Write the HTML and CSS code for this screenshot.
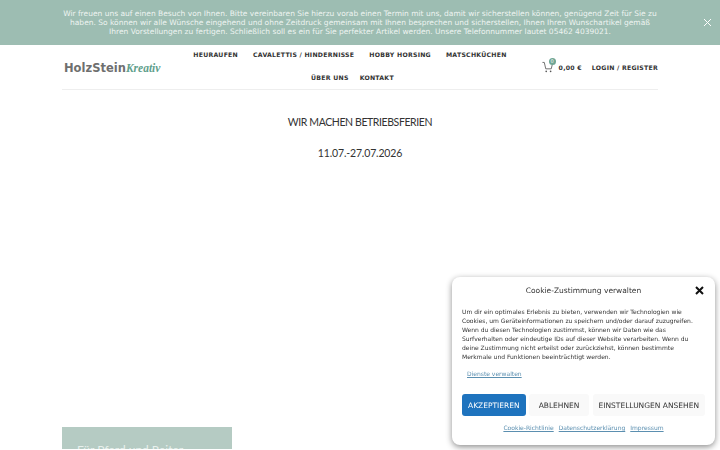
FILE: index.html
```html
<!DOCTYPE html>
<html lang="de">
<head>
  <meta charset="UTF-8">
  <meta name="viewport" content="width=device-width, initial-scale=1.0">
  <title>HolzStein Kreativ</title>
  <link rel="stylesheet" href="styles.css">
</head>
<body>

  <div class="notice">
    <p>Wir freuen uns auf einen Besuch von Ihnen. Bitte vereinbaren Sie hierzu vorab einen Termin mit uns, damit wir sicherstellen können, genügend Zeit für Sie zu haben. So können wir alle Wünsche eingehend und ohne Zeitdruck gemeinsam mit Ihnen besprechen und sicherstellen, Ihnen Ihren Wunschartikel gemäß Ihren Vorstellungen zu fertigen. Schließlich soll es ein für Sie perfekter Artikel werden. Unsere Telefonnummer lautet 05462 4039021.</p>
    <svg class="notice-close" width="9" height="9" viewBox="0 0 9 9"><path d="M1 1l7 7M8 1L1 8" stroke="#fff" stroke-width="1" fill="none"/></svg>
  </div>

  <header class="site-header">
    <a class="logo" href="#"><span class="logo-main">HolzStein</span><span class="logo-script">Kreativ</span></a>
    <nav class="main-nav">
      <a href="#">HEURAUFEN</a>
      <a href="#">CAVALETTIS / HINDERNISSE</a>
      <a href="#">HOBBY HORSING</a>
      <a href="#">MATSCHKÜCHEN</a>
      <a class="nav-about" href="#">ÜBER UNS</a>
      <a href="#">KONTAKT</a>
    </nav>
    <div class="header-tools">
      <div class="cart">
        <svg width="11" height="12" viewBox="0 0 12 13"><path d="M0.5 1.5h2l1.6 7h6l1.2-5" stroke="#555" stroke-width="0.9" fill="none"/><circle cx="4.6" cy="11.3" r="0.9" fill="#555"/><circle cx="9.4" cy="11.3" r="0.9" fill="#555"/></svg>
        <span class="cart-count">0</span>
      </div>
      <span class="cart-total">0,00 €</span>
      <a class="login" href="#">LOGIN / REGISTER</a>
    </div>
  </header>

  <main class="content">
    <h2>WIR MACHEN BETRIEBSFERIEN</h2>
    <h2 class="dates">11.07.-27.07.2026</h2>
    <div class="teaser">Für Pferd und Reiter</div>
  </main>

  <div class="cookie-box">
    <div class="cookie-head">
      <span>Cookie-Zustimmung verwalten</span>
      <svg class="cookie-close" width="9" height="9" viewBox="0 0 9 9"><path d="M1 1l7 7M8 1L1 8" stroke="#111" stroke-width="2" fill="none"/></svg>
    </div>
    <p class="cookie-text">Um dir ein optimales Erlebnis zu bieten, verwenden wir Technologien wie Cookies, um Geräteinformationen zu speichern und/oder darauf zuzugreifen. Wenn du diesen Technologien zustimmst, können wir Daten wie das Surfverhalten oder eindeutige IDs auf dieser Website verarbeiten. Wenn du deine Zustimmung nicht erteilst oder zurückziehst, können bestimmte Merkmale und Funktionen beeinträchtigt werden.</p>
    <a class="manage" href="#">Dienste verwalten</a>
    <div class="cookie-buttons">
      <button class="btn btn-accept">AKZEPTIEREN</button>
      <button class="btn btn-decline">ABLEHNEN</button>
      <button class="btn">EINSTELLUNGEN ANSEHEN</button>
    </div>
    <div class="cookie-links">
      <a href="#">Cookie-Richtlinie</a>
      <a href="#">Datenschutzerklärung</a>
      <a href="#">Impressum</a>
    </div>
  </div>

</body>
</html>
```

FILE: styles.css
```css
html, body {
  height: 100%;
  overflow: hidden;
}
body {
  margin: 0;
  background-color: #fff;
  font-family: "DejaVu Sans", sans-serif;
  color: #333;
}
a {
  color: inherit;
  text-decoration: none;
}

.notice {
  position: relative;
  height: 45px;
  box-sizing: border-box;
  padding-top: 9px;
  background-color: #9dbdb2;
}
.notice p {
  width: 600px;
  margin: 0 auto;
  font-size: 7.5px;
  line-height: 9px;
  text-align: center;
  color: #eef4f1;
}
.notice-close {
  position: absolute;
  top: 18px;
  right: 8px;
}

.site-header {
  display: flex;
  align-items: center;
  width: 596px;
  height: 44px;
  margin: 0 auto;
  border-bottom: 1px solid #eee;
}
.logo {
  display: flex;
  align-items: baseline;
  width: 118px;
  margin: 2px 0 0 2px;
  flex-shrink: 0;
}
.logo-main {
  font-size: 11.5px;
  font-weight: bold;
  color: #6f6f6f;
}
.logo-script {
  font-family: "Liberation Serif", serif;
  font-style: italic;
  font-weight: bold;
  font-size: 11.5px;
  color: #5fa08c;
}
.main-nav {
  display: flex;
  flex-wrap: wrap;
  justify-content: center;
  column-gap: 15px;
  width: 330px;
  margin: -2px 0 0 3px;
}
.main-nav a {
  line-height: 23px;
  font-size: 6.2px;
  font-weight: bold;
  letter-spacing: 0.25px;
  color: #333;
}
.main-nav .nav-about {
  margin: 0 -4px 0 5px;
}
.header-tools {
  display: flex;
  align-items: center;
  margin-left: auto;
  font-size: 6.2px;
  font-weight: bold;
  letter-spacing: 0.25px;
}
.cart {
  position: relative;
  display: flex;
  margin-right: 6px;
}
.cart-count {
  position: absolute;
  top: -3px;
  left: 7px;
  width: 7px;
  height: 7px;
  border-radius: 50%;
  background-color: #6fa593;
  font-size: 5px;
  font-weight: normal;
  line-height: 7px;
  text-align: center;
  color: #fff;
}
.cart-total {
  margin-right: 10px;
}

.content {
  width: 596px;
  margin: 0 auto;
  text-align: center;
}
.content h2 {
  margin: 24px 0 0;
  font-family: Lato, sans-serif;
  font-size: 10.5px;
  font-weight: 400;
  letter-spacing: -0.4px;
  line-height: 16px;
  color: #333;
}
.content .dates {
  margin-top: 15px;
  letter-spacing: -0.15px;
}
.teaser {
  width: 170px;
  height: 22px;
  box-sizing: border-box;
  margin-top: 266px;
  padding: 15px 15px 0;
  overflow: hidden;
  background-color: #b5cbc3;
  font-family: Lato, sans-serif;
  font-size: 12px;
  text-align: left;
  color: #e8f0ed;
}

.cookie-box {
  position: fixed;
  left: 452px;
  top: 277px;
  width: 263px;
  height: 168px;
  box-sizing: border-box;
  padding: 8px 10px;
  background-color: #fff;
  border-radius: 8px;
  box-shadow: 0 2px 6px rgba(0, 0, 0, 0.45);
}
.cookie-head {
  position: relative;
  font-size: 7.5px;
  line-height: 11px;
  text-align: center;
}
.cookie-close {
  position: absolute;
  right: 1px;
  top: 1px;
}
.cookie-text {
  margin: 11px 0 0;
  font-size: 6px;
  line-height: 9px;
  color: #333;
}
.manage {
  display: block;
  margin: 8px 0 0 5px;
  font-size: 6px;
  line-height: 9px;
  color: #5b8fb0;
  text-decoration: underline;
}
.cookie-buttons {
  display: flex;
  justify-content: space-between;
  margin-top: 16px;
}
.btn {
  height: 22px;
  padding: 0 6px;
  border: 0;
  border-radius: 3px;
  background-color: #f9f9f9;
  font-family: "DejaVu Sans", sans-serif;
  font-size: 7.5px;
  white-space: nowrap;
  color: #333;
}
.btn-accept {
  background-color: #1e73be;
  color: #fff;
}
.btn-decline {
  padding: 0 10px;
}
.cookie-links {
  display: flex;
  justify-content: center;
  gap: 5px;
  margin-top: 7px;
  font-size: 6px;
  line-height: 9px;
  color: #5b8fb0;
}
.cookie-links a {
  text-decoration: underline;
}
```
